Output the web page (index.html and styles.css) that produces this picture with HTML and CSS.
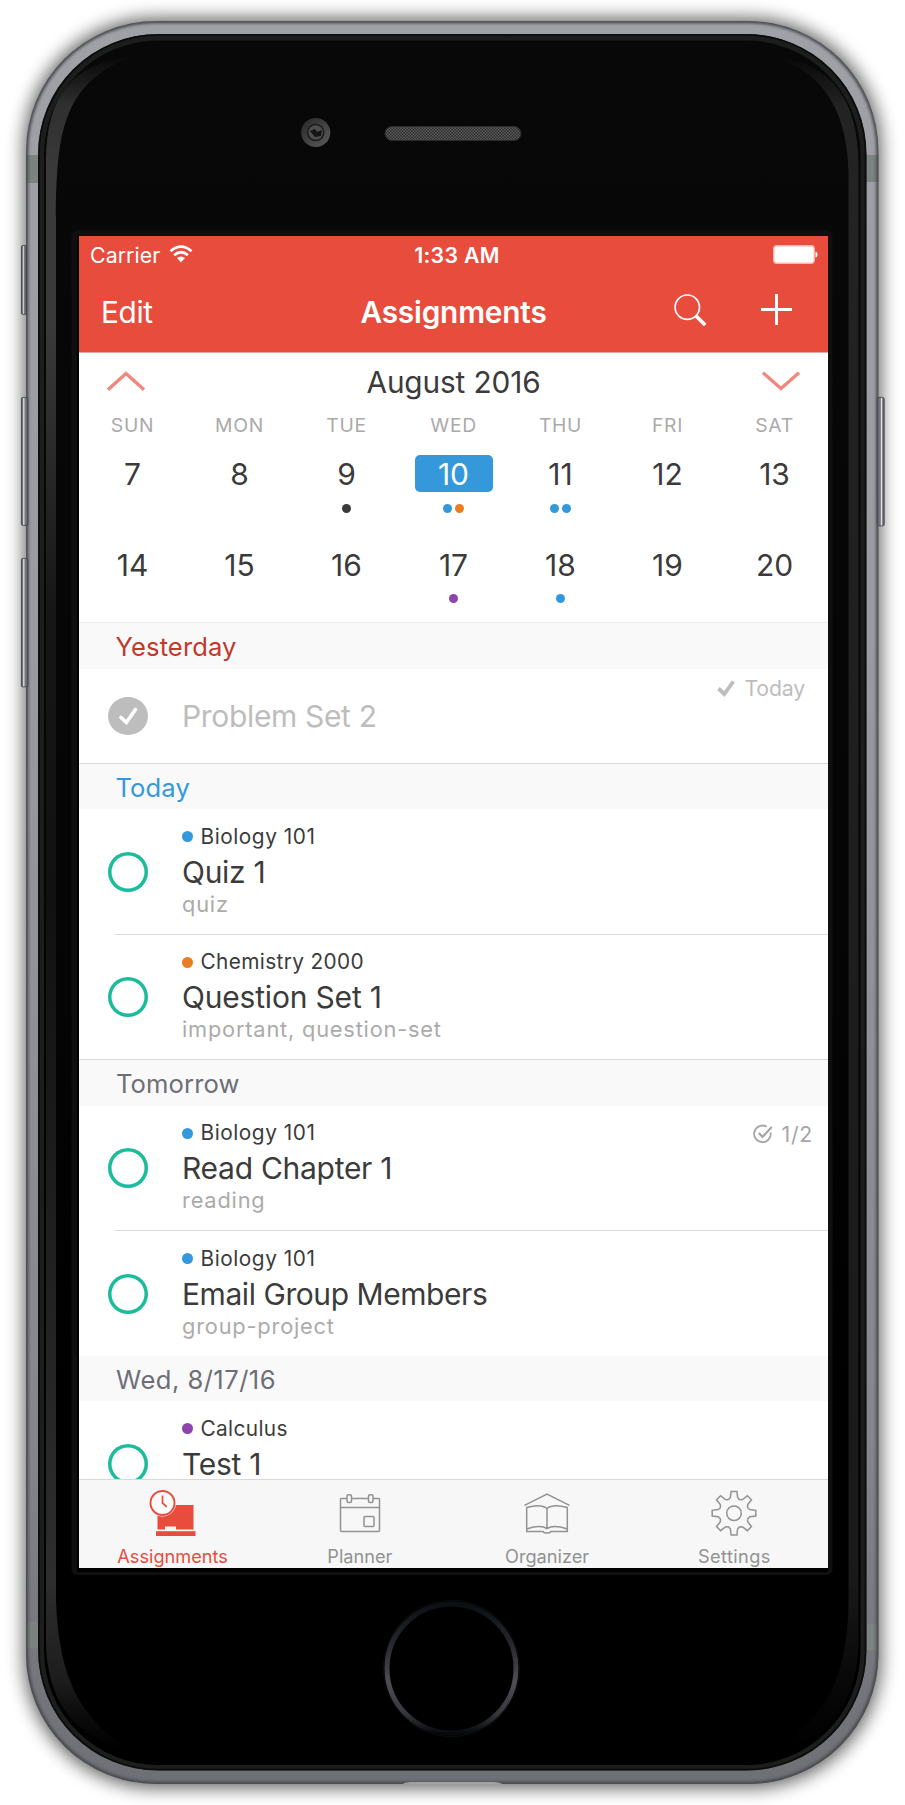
FILE: index.html
```html
<!DOCTYPE html>
<html lang="en">
<head>
<meta charset="utf-8">
<title>Assignments</title>
<link rel="stylesheet" href="styles.css">
</head>
<body>
<div class="phone">
  <svg class="device" width="905" height="1805" viewBox="0 0 905 1805" aria-hidden="true">
    <defs>
      <filter id="soft" x="-10%" y="-10%" width="120%" height="120%"><feGaussianBlur stdDeviation="9"/></filter>
      <filter id="edge" x="-5%" y="-5%" width="110%" height="110%"><feGaussianBlur stdDeviation="1.800"/></filter>
      <linearGradient id="metal" x1="0" y1="0" x2="0" y2="1">
        <stop offset="0" stop-color="#a0a1a7"/><stop offset=".35" stop-color="#9a9ba1"/><stop offset=".8" stop-color="#85868b"/><stop offset="1" stop-color="#6f7075"/>
      </linearGradient>
      <linearGradient id="glass" x1="0" y1="0" x2="0" y2="1">
        <stop offset="0" stop-color="#080808"/><stop offset=".5" stop-color="#050505"/><stop offset=".8" stop-color="#000"/>
      </linearGradient>
      <linearGradient id="stripL" gradientUnits="userSpaceOnUse" x1="0" y1="55" x2="0" y2="1750">
        <stop offset="0" stop-color="#2b2b2b" stop-opacity="0"/><stop offset=".03" stop-color="#303030"/><stop offset=".07" stop-color="#3a3a3a"/><stop offset=".16" stop-color="#3a3a3a"/><stop offset=".33" stop-color="#161616"/><stop offset=".5" stop-color="#111"/><stop offset=".9" stop-color="#2e2e2e"/><stop offset=".96" stop-color="#1c1c1c"/><stop offset="1" stop-color="#111" stop-opacity="0"/>
      </linearGradient>
      <linearGradient id="stripR" gradientUnits="userSpaceOnUse" x1="0" y1="55" x2="0" y2="1750">
        <stop offset="0" stop-color="#222" stop-opacity="0"/><stop offset=".03" stop-color="#232323"/><stop offset=".9" stop-color="#191919"/><stop offset="1" stop-color="#111" stop-opacity="0"/>
      </linearGradient>
      <linearGradient id="home" x1="0" y1="0" x2="0" y2="1">
        <stop offset="0" stop-color="#0c1014"/><stop offset=".3" stop-color="#25272c"/><stop offset=".6" stop-color="#4d4d53"/><stop offset=".85" stop-color="#36373c"/><stop offset="1" stop-color="#07090b"/>
      </linearGradient>
      <linearGradient id="cup" x1="0" y1="0" x2="1" y2="1"><stop offset="0" stop-color="#262626"/><stop offset="1" stop-color="#5c5c5c"/></linearGradient>
      <linearGradient id="key" x1="0" y1="0" x2="1" y2="0"><stop offset="0" stop-color="#55565c"/><stop offset=".22" stop-color="#77787e"/><stop offset=".36" stop-color="#f0f0f4"/><stop offset=".55" stop-color="#7b7c82"/><stop offset="1" stop-color="#5b5c62"/></linearGradient>
      <pattern id="mesh" width="3" height="3" patternUnits="userSpaceOnUse"><rect width="3" height="3" fill="#2a2a2a"/><rect width="1.500" height="1.500" fill="#5e5e5e"/><rect x="1.500" y="1.500" width="1.500" height="1.500" fill="#5e5e5e"/></pattern>
      <clipPath id="body"><rect x="26" y="21" width="852.500" height="1763" rx="130"/></clipPath>
    </defs>
    <rect x="24" y="18" width="857" height="1770" rx="131" fill="#000" opacity=".62" filter="url(#soft)"/>
    <rect x="26" y="21" width="852.500" height="1763" rx="130" fill="url(#metal)"/>
    <g clip-path="url(#body)">
      <g fill="#7c8381"><rect x="26" y="155" width="12" height="28"/><rect x="866" y="155" width="13" height="27"/><rect x="26" y="1622" width="12" height="26"/><rect x="866" y="1624" width="13" height="26"/></g>
      <rect x="26" y="21" width="852.500" height="1763" rx="130" fill="none" stroke="#45464c" stroke-width="4.500" filter="url(#edge)"/>
    </g>
    <g fill="url(#key)" stroke="#3f4045" stroke-width=".8">
      <rect x="21.400" y="245.400" width="5" height="69" rx="1.500"/>
      <rect x="21.400" y="397.400" width="6.500" height="128" rx="1.500"/>
      <rect x="21.400" y="558.400" width="6.500" height="128.500" rx="1.500"/>
      <rect x="-884.200" y="397.400" width="7" height="128.500" rx="1.500" transform="scale(-1 1)"/>
    </g>
    <path d="M402 1784.500Q405 1782.200 411 1782H493Q500 1782.200 503 1784.500Z" fill="#a2a2a4"/>
    <rect x="38" y="34" width="828.500" height="1736.500" rx="120" fill="#1c1d1d"/>
    <rect x="39" y="35" width="826.500" height="1734.500" rx="119" fill="none" stroke="#0b0b0b" stroke-width="1.500"/>
    <rect x="44" y="40.500" width="816.500" height="1724.500" rx="114" fill="url(#glass)"/>
    <path d="M130 57C74 62 46 96 46 160V1640C46 1700 74 1740 130 1750C88 1722 59 1690 56 1600V220C56 125 66 84 130 57Z" fill="url(#stripL)"/>
    <path d="M775 57C831 62 858.500 100 858.500 165V1640C858.500 1700 831 1740 775 1750C817 1722 848 1690 848.500 1600V175C848 120 830 75 775 57Z" fill="url(#stripR)"/>
    <circle cx="315.700" cy="132.500" r="14.600" fill="url(#cup)"/>
    <circle cx="315.700" cy="132.500" r="8" fill="#4e4e4e" stroke="#1b1b1b" stroke-width="1.500"/>
    <path d="M310 131l5-2 2 3 5-2-1 6-6 1z" fill="#151515"/>
    <rect x="385" y="126.500" width="136" height="14" rx="7" fill="url(#mesh)" stroke="#2b2b2b"/>
    <rect x="71.500" y="230" width="761" height="1345" rx="6" fill="#0f0f0f"/>
    <rect x="77" y="236" width="751" height="1336" fill="#000"/>
    <circle cx="451.500" cy="1668.500" r="64.500" fill="#000" stroke="url(#home)" stroke-width="5"/>
    <circle cx="451.500" cy="1668.500" r="68" fill="none" stroke="#0b0d0f"/>
  </svg>

  <main class="screen">
    <header class="top">
      <div class="status">
        <span class="carrier">Carrier
          <svg width="24" height="18" viewBox="0 0 24 18" fill="none" stroke="#fff" stroke-width="2.800"><path d="M1.500 6.200Q12-3 22.500 6.200M5.200 10.300Q12 4.300 18.800 10.300"/><path d="M12 17.200L8 13.100Q12 9.700 16 13.100Z" fill="#fff" stroke="none"/></svg>
        </span>
        <span class="time">1:33 AM</span>
        <svg class="battery" width="45" height="19" viewBox="0 0 45 19"><rect x=".7" y=".7" width="40.500" height="17.600" rx="3" fill="#fff" stroke="#f7b9b2" stroke-width="1.400"/><path d="M42.500 6.500Q44.600 7 44.600 9.500T42.500 12.500Z" fill="#fff"/></svg>
      </div>
      <nav class="nav">
        <span class="edit">Edit</span>
        <h1>Assignments</h1>
        <span class="actions">
          <svg width="33" height="33" viewBox="0 0 33 33" fill="none" stroke="#fff"><circle cx="13.300" cy="13.200" r="12.200" stroke-width="1.700"/><path d="M21.500 21.500L31.200 31" stroke-width="3.600"/></svg>
          <svg width="31" height="31" viewBox="0 0 31 31" stroke="#fff" stroke-width="3"><path d="M0 15.500H31M15.500 0V31"/></svg>
        </span>
      </nav>
    </header>

    <section class="calendar">
      <div class="month">
        <svg width="38" height="21" viewBox="0 0 38 21" fill="none" stroke="#ef897f" stroke-width="3.400"><path d="M1 18.700L19 2.500L37 18.700"/></svg>
        <h2>August 2016</h2>
        <svg width="38" height="21" viewBox="0 0 38 21" fill="none" stroke="#ef897f" stroke-width="3.400"><path d="M1 1.700L19 17.500L37 1.700"/></svg>
      </div>
      <div class="week names"><span>SUN</span><span>MON</span><span>TUE</span><span>WED</span><span>THU</span><span>FRI</span><span>SAT</span></div>
      <div class="week days">
        <div class="day"><b>7</b></div>
        <div class="day"><b>8</b></div>
        <div class="day"><b>9</b><p><i class="dark"></i></p></div>
        <div class="day selected"><b>10</b><p><i class="blue"></i><i class="orange"></i></p></div>
        <div class="day"><b>11</b><p><i class="blue"></i><i class="blue"></i></p></div>
        <div class="day"><b>12</b></div>
        <div class="day"><b>13</b></div>
        <div class="day"><b>14</b></div>
        <div class="day"><b>15</b></div>
        <div class="day"><b>16</b></div>
        <div class="day"><b>17</b><p><i class="purple"></i></p></div>
        <div class="day"><b>18</b><p><i class="blue"></i></p></div>
        <div class="day"><b>19</b></div>
        <div class="day"><b>20</b></div>
      </div>
    </section>

    <div class="list">
      <h3 class="past">Yesterday</h3>
      <article class="row done">
        <svg class="check" width="40" height="38" viewBox="0 0 40 38"><ellipse cx="20" cy="19" rx="20" ry="19" fill="#bdbdbd"/><path d="M13 20.500L18.300 25.500L27.500 12.500" fill="none" stroke="#fff" stroke-width="3.600" stroke-linecap="round"/></svg>
        <div class="title">Problem Set 2</div>
        <div class="note"><svg width="18" height="17" viewBox="0 0 18 17" fill="none" stroke="#bdbdbd" stroke-width="3.800"><path d="M1.500 8.500L7.300 14L16.300 1.500"/></svg>Today</div>
      </article>

      <h3 class="today">Today</h3>
      <article class="row inset">
        <span class="ring"></span>
        <div class="text"><div class="course"><i class="blue"></i>Biology 101</div><div class="title">Quiz 1</div><div class="tags">quiz</div></div>
      </article>
      <article class="row last">
        <span class="ring"></span>
        <div class="text"><div class="course snug"><i class="orange"></i>Chemistry 2000</div><div class="title wide">Question Set 1</div><div class="tags">important, question-set</div></div>
      </article>

      <h3>Tomorrow</h3>
      <article class="row inset">
        <span class="ring"></span>
        <div class="text"><div class="course"><i class="blue"></i>Biology 101</div><div class="title">Read Chapter 1</div><div class="tags">reading</div></div>
        <div class="note progress"><svg width="20" height="20" viewBox="0 0 20 20" fill="none" stroke="#a6a6a6" stroke-width="1.800"><path d="M17.600 8.300A8.300 8.300 0 1 1 13.800 2.800"/><path d="M5.800 9L9.500 12.800L18.800 3" stroke-width="2.200"/></svg>1/2</div>
      </article>
      <article class="row short">
        <span class="ring"></span>
        <div class="text"><div class="course"><i class="blue"></i>Biology 101</div><div class="title tight">Email Group Members</div><div class="tags">group-project</div></div>
      </article>

      <h3 class="date">Wed, 8/17/16</h3>
      <article class="row partial">
        <span class="ring"></span>
        <div class="text"><div class="course snug"><i class="purple"></i>Calculus</div><div class="title">Test 1</div></div>
      </article>
    </div>

    <footer class="tabs">
      <div class="tab active">
        <svg width="48" height="48" viewBox="0 0 48 48"><path d="M8.500 17H44.500V41.500H27V38.500H16V41.500H8.500Z" fill="#e84c3d"/><rect x="7" y="43.200" width="39.500" height="4.800" fill="#e84c3d"/><circle cx="13.500" cy="15" r="13.500" fill="#f6f8f9"/><circle cx="13.500" cy="15" r="12" fill="#f9fafa" stroke="#e84c3d" stroke-width="1.900"/><path d="M13.500 7.500V15L17.800 18.800" fill="none" stroke="#e84c3d" stroke-width="1.700"/></svg>
        <span>Assignments</span>
      </div>
      <div class="tab">
        <svg width="48" height="48" viewBox="0 0 48 48" fill="none" stroke="#929292" stroke-width="1.500"><path d="M11 10.500H5.500Q4.500 10.500 4.500 11.500V42.500Q4.500 43.500 5.500 43.500H42.500Q43.500 43.500 43.500 42.500V11.500Q43.500 10.500 42.500 10.500H37M32.500 10.500H15.500M4.500 19.500H43.500"/><rect x="11" y="6.700" width="4.500" height="7.800" rx="1.500"/><rect x="32.500" y="6.700" width="4.500" height="7.800" rx="1.500"/><rect x="28" y="28.500" width="10" height="10" rx="1"/></svg>
        <span>Planner</span>
      </div>
      <div class="tab">
        <svg width="48" height="48" viewBox="0 0 48 48" fill="none" stroke="#929292" stroke-width="1.500"><path d="M1.500 17.300L24 6L46.500 17.300M24 20.500Q18 15.700 3.700 19.500V43.500H20Q21 45 24 45T28 43.500H44.300V19.500Q30 15.700 24 20.500V40.500M3.700 41Q17 36.500 24 40.500Q31 36.500 44.300 41"/></svg>
        <span>Organizer</span>
      </div>
      <div class="tab settings">
        <svg width="48" height="48" viewBox="0 0 48 48" fill="none" stroke="#929292" stroke-width="1.500"><g transform="translate(24 25.200)"><circle r="7.300"/><g id="tooth"><path d="M-5.200 -13.900L-3.600 -15.800L-2.900 -21.800H2.900L3.600 -15.800L5.200 -13.900L6.150 -13.500"/></g><use href="#tooth" transform="rotate(45)"/><use href="#tooth" transform="rotate(90)"/><use href="#tooth" transform="rotate(135)"/><use href="#tooth" transform="rotate(180)"/><use href="#tooth" transform="rotate(225)"/><use href="#tooth" transform="rotate(270)"/><use href="#tooth" transform="rotate(315)"/></g></svg>
        <span>Settings</span>
      </div>
    </footer>
  </main>
</div>
</body>
</html>
```
FILE: styles.css
```css
* { box-sizing: border-box; }
body { margin: 0; background: #fff; font-family: Inter, "Liberation Sans", sans-serif; color: #3b3b3b; }
h1, h2, h3, p { margin: 0; font-weight: 400; }
svg { display: block; flex: none; }
i { display: block; flex: none; border-radius: 50%; }

.phone { position: relative; width: 905px; height: 1805px; padding: 236px 77px 237px 79px; overflow: hidden; }
.device { position: absolute; left: 0; top: 0; }
.screen { position: relative; display: flex; flex-direction: column; width: 749px; height: 1332px; background: #fff; overflow: hidden; }

.blue { background: #3498db; }
.orange { background: #e67e22; }
.purple { background: #8e44ad; }
.dark { background: #3b3b3b; }

.top { flex: none; height: 117px; background: #e84c3d; color: #fff; border-bottom: 1px solid #e2aaa4; }
.status { display: grid; grid-template-columns: 1fr auto 1fr; height: 38px; padding: 0 10px; font-size: 21.3px; line-height: 38px; }
.carrier { display: flex; gap: 9px; padding-left: 1px; letter-spacing: .08px; }
.carrier svg { margin-top: 9px; }
.time { padding-left: 7px; font-weight: 600; letter-spacing: .31px; }
.battery { justify-self: end; margin-top: 9px; }
.nav { display: grid; grid-template-columns: 1fr auto 1fr; height: 77px; padding: 0 22px; font-size: 29.8px; line-height: 76px; }
.edit { letter-spacing: -.36px; }
.nav h1 { font-size: inherit; font-weight: 600; letter-spacing: -.18px; }
.actions { display: flex; justify-content: flex-end; gap: 54px; padding: 20px 14px 0 0; }

.calendar { flex: none; height: 270px; border-bottom: 1px solid #ececec; }
.month { display: flex; justify-content: space-between; height: 57px; padding: 0 28px; }
.month svg { margin-top: 18px; }
.month h2 { font-size: 29.8px; line-height: 58px; letter-spacing: -.13px; }
.week { display: grid; grid-template-columns: repeat(7, 107px); }
.names { height: 45px; font-size: 19.3px; line-height: 30px; letter-spacing: .7px; text-align: center; color: #aaa; }
.day { display: flex; flex-direction: column; align-items: center; height: 90.6px; }
.day b { width: 78px; height: 37px; border-radius: 5px; font-size: 30px; line-height: 38px; font-weight: 400; text-align: center; }
.day p { display: flex; gap: 3.5px; margin-top: 11.5px; }
.day i { width: 9px; height: 9px; }
.selected b { background: #3498db; color: #fff; }

.list { flex: 1; min-height: 0; overflow: hidden; }
.list h3 { height: 45.5px; padding-left: 37px; background: #f9f9fa; font-size: 25.6px; line-height: 47px; letter-spacing: .1px; color: #6d6e78; }
.list .past { padding-left: 36.5px; color: #c0392b; }
.list .today { padding-left: 36.5px; color: #3498db; }
.list .date { letter-spacing: .46px; }
.row { position: relative; display: flex; height: 125.5px; padding-left: 29px; }
.inset::after { content: ""; position: absolute; left: 36px; right: 0; bottom: 0; height: 1px; background: #d9d9d9; }
.last, .done { border-bottom: 1px solid #d9d9d9; }
.short { height: 124.8px; }
.ring { flex: none; width: 40px; height: 40px; margin-top: 42.5px; box-shadow: inset 0 0 0 3.5px #1abc9c; border-radius: 50%; }
.text { flex: 1; padding: 12.5px 0 0 34px; }
.course { display: flex; align-items: center; gap: 7.5px; font-size: 20.8px; line-height: 30px; letter-spacing: .55px; }
.course i { width: 11px; height: 11px; }
.snug { letter-spacing: .37px; }
.title { font-size: 30px; line-height: 41px; letter-spacing: -.28px; }
.wide { letter-spacing: -.19px; }
.tight { letter-spacing: -.44px; }
.tags { font-size: 21.8px; line-height: 23px; letter-spacing: .8px; color: #ababab; }
.partial { height: 78px; }
.partial .title { padding-top: 5px; line-height: 30px; }
.done { height: 95px; color: #bdbdbd; }
.check { margin-top: 28px; }
.done .title { padding-left: 34px; line-height: 94px; letter-spacing: -.34px; }
.note { display: flex; gap: 9px; height: 30px; font-size: 21.3px; line-height: 30px; color: #bdbdbd; letter-spacing: -.2px; }
.done .note { margin: 4px 23px 0 auto; }
.note svg { margin-top: 7px; }
.progress { gap: 8.5px; margin: 13px 15px 0 0; color: #a6a6a6; letter-spacing: .7px; }
.progress svg { margin-top: 5px; }

.tabs { flex: none; display: grid; grid-template-columns: repeat(4, 1fr); height: 89px; border-top: 1.5px solid #d9d9d9; background: #f7f7f8; color: #929292; font-size: 18.2px; line-height: 22px; }
.tab { display: flex; flex-direction: column; align-items: center; padding-top: 8px; }
.tab span { margin-top: 8.5px; }
.active { color: #e84c3d; }
.settings span { letter-spacing: .38px; }
```
